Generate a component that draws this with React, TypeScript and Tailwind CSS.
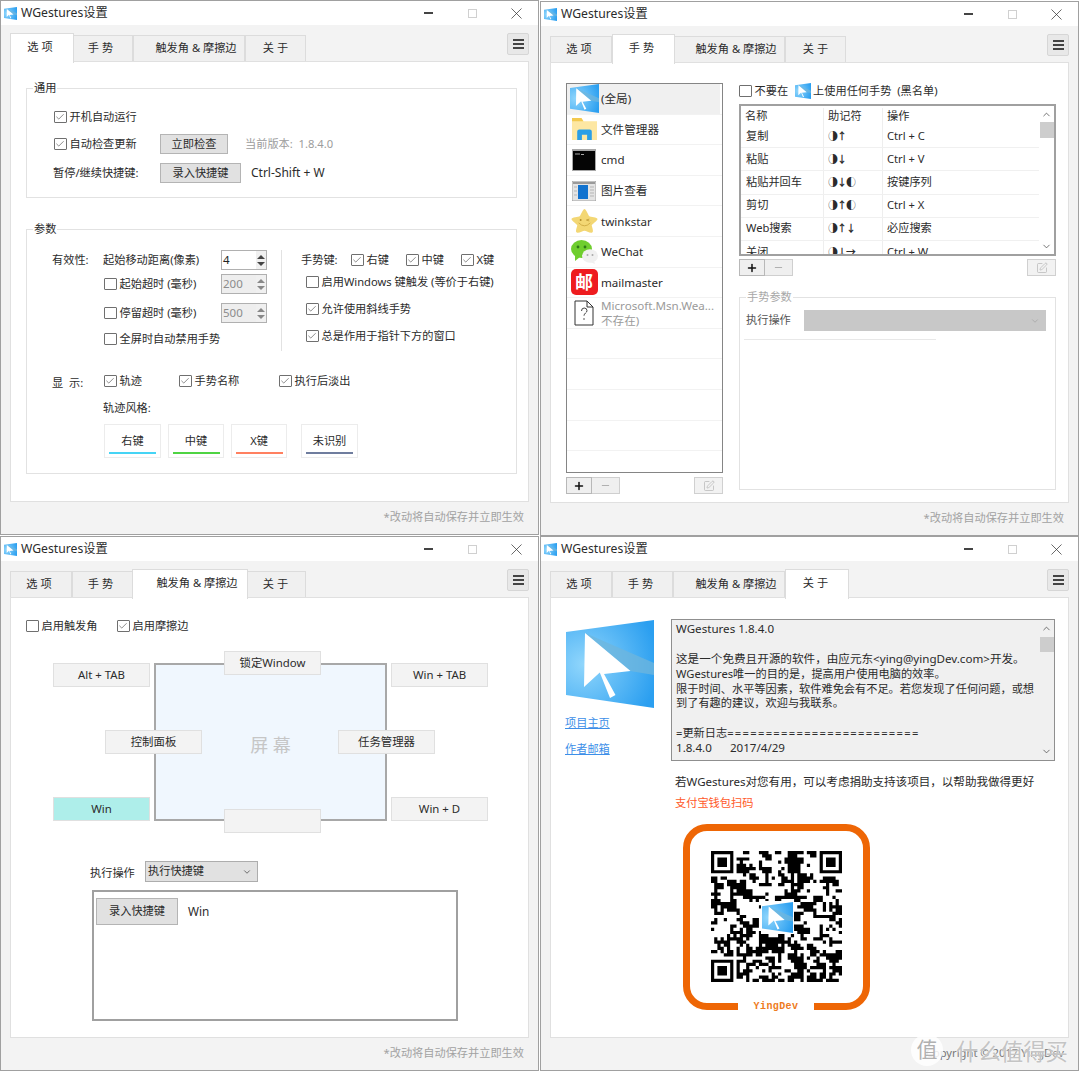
import { ReactNode } from "react";
import { Check, ChevronDown, ChevronUp, Minus, Plus, SquarePen, X } from "lucide-react";

const tabs = [
  { label: "选 项", size: "w-[62px] pr-[4px]", on: "w-[64px] -mr-[2px] pr-[4px]" },
  { label: "手 势", size: "w-[61px] pr-[4px]", on: "w-[63px] -mr-[2px] pr-[4px]" },
  { label: "触发角 & 摩擦边", size: "w-[112px] pl-[14px]", on: "w-[116px] -ml-[1px] -mr-[3px] pl-[14px]" },
  { label: "关 于", size: "w-[61px]", on: "w-[64px] -mr-[3px] pr-[3px]" },
];

function Logo({ className }: { className: string }) {
  return (
    <svg viewBox="0 0 88 88" className={className}>
      <defs>
        <radialGradient id="logoFill" cx="20%" cy="50%" r="85%">
          <stop offset="0%" stopColor="#90d6fc" />
          <stop offset="100%" stopColor="#2b9ff0" />
        </radialGradient>
      </defs>
      <polygon points="0,12 88,0 88,88 0,75" fill="url(#logoFill)" />
      <polygon points="19,13 88,43 88,55 64,51" fill="#6fb6dc" opacity="0.75" />
      <polygon points="19,13 64.5,51 38,54 49.5,75 44,78 33.8,52.5 18,67" fill="#ffffff" />
    </svg>
  );
}

function TitleBar() {
  return (
    <div className="flex h-[24px] items-center bg-white">
      <Logo className="ml-[3px] h-[13px] w-[13px]" />
      <span className="ml-[4px] text-[12.2px] text-[#2b2b2b]">WGestures设置</span>
      <div className="ml-auto flex items-center text-[#2b2b2b]">
        <div className="flex h-[18px] w-[44px] items-center justify-center">
          <div className="h-[1.5px] w-[9px] bg-[#444]" />
        </div>
        <div className="flex h-[18px] w-[44px] items-center justify-center">
          <div className="h-[9px] w-[9px] border border-[#d0d0d0]" />
        </div>
        <div className="flex h-[18px] w-[44px] items-center justify-center">
          <X size={19} strokeWidth={0.9} />
        </div>
      </div>
    </div>
  );
}

function Window({
  active,
  children,
  footer,
  className = "",
}: {
  active: number;
  children: ReactNode;
  footer?: ReactNode;
  className?: string;
}) {
  return (
    <div className={`flex h-[535px] w-[539px] flex-col border border-[#a0a0a0] bg-[#f3f3f3] ${className}`}>
      <TitleBar />
      <div className="flex-1 pl-[9px] pr-[9px] pt-[8px]">
        {/* Tabs */}
        <div className="flex h-[28px] items-start">
          {tabs.map((t, i) =>
            i === active ? (
              <div
                key={t.label}
                className={`relative z-10 flex h-[30px] items-center justify-center border border-b-0 border-[#dcdcdc] bg-white pb-[2px] text-[11.2px] text-[#2b2b2b] ${t.on}`}
              >
                {t.label}
              </div>
            ) : (
              <div
                key={t.label}
                className={`mt-[2px] flex h-[26px] items-center justify-center border border-b-0 border-[#dcdcdc] bg-[#f0f0f0] text-[11.2px] text-[#2b2b2b] ${t.size}`}
              >
                {t.label}
              </div>
            ),
          )}
          <div className="ml-auto flex h-[22px] w-[22px] flex-col items-center justify-center gap-[2px] rounded-[2px] border border-[#d6d6d6] bg-[#e8e8e8]">
            <div className="h-[2px] w-[11px] bg-[#444]" />
            <div className="h-[2px] w-[11px] bg-[#444]" />
            <div className="h-[2px] w-[11px] bg-[#444]" />
          </div>
        </div>
        <div className="h-[441px] border border-[#e0e0e0] bg-white pl-[15px]">{children}</div>
        <div className="relative flex h-[30px] items-center justify-end pr-[5px] text-[11.2px] text-[#a2a2a2]">
          {footer ?? "*改动将自动保存并立即生效"}
        </div>
      </div>
    </div>
  );
}

function CheckBox({ label, checked, className = "" }: { label: string; checked?: boolean; className?: string }) {
  return (
    <div className={`flex h-[20px] items-center ${className}`}>
      <div className="flex h-[12.5px] w-[12.5px] shrink-0 items-center justify-center rounded-[1px] border border-[#6f6f6f] bg-white">
        {checked && <Check size={10} strokeWidth={1.3} className="text-[#2b2b2b]" />}
      </div>
      <span className="ml-[3px] whitespace-nowrap text-[11.2px] text-[#2b2b2b]">{label}</span>
    </div>
  );
}

function Btn({ children, className }: { children: ReactNode; className: string }) {
  return (
    <div className={`flex items-center justify-center border border-[#b4b4b4] bg-[#e1e1e1] text-[11.2px] text-[#2b2b2b] ${className}`}>
      {children}
    </div>
  );
}

function Spinner({ value, disabled }: { value: string; disabled?: boolean }) {
  return (
    <div
      className={`flex h-[20px] w-[46px] items-center border border-[#b0b0b0] pl-[1px] text-[11.5px] ${
        disabled ? "bg-[#eeeeee] text-[#8c8c8c]" : "bg-white text-[#222]"
      }`}
    >
      <span className="flex-1">{value}</span>
      <div className="flex h-full w-[10px] flex-col justify-center gap-[3px] bg-[#f0f0f0]">
        <svg viewBox="0 0 8 4" className="h-[4px] w-[10px]">
          <polygon points="4,0 8,4 0,4" fill={disabled ? "#888" : "#444"} />
        </svg>
        <svg viewBox="0 0 8 4" className="h-[4px] w-[10px]">
          <polygon points="0,0 8,0 4,4" fill={disabled ? "#888" : "#444"} />
        </svg>
      </div>
    </div>
  );
}

function Group({
  label,
  muted,
  className,
  children,
}: {
  label: string;
  muted?: boolean;
  className: string;
  children: ReactNode;
}) {
  return (
    <div className={`relative border border-[#e2e2e2] ${className}`}>
      <span
        className={`absolute -top-[9px] left-[6px] bg-white px-[1px] text-[11.2px] leading-[16px] ${
          muted ? "text-[#a8a8a8]" : "text-[#2b2b2b]"
        }`}
      >
        {label}
      </span>
      {children}
    </div>
  );
}

function StyleButton({ label, bar, className }: { label: string; bar: string; className: string }) {
  return (
    <div className={`flex h-[34px] flex-col items-center border border-[#ececec] pt-[8px] text-[11.2px] text-[#2b2b2b] ${className}`}>
      <span className="leading-[16px]">{label}</span>
      <div className={`mt-[3px] h-[2px] w-[47px] ${bar}`} />
    </div>
  );
}

function OptionsPanel() {
  return (
    <div className="pt-[26px]">
      <Group label="通用" className="h-[110px] w-[491px] pl-[27px] pt-[18px]">
        <CheckBox checked label="开机自动运行" />
        <div className="mt-[7px] flex h-[20px] items-center">
          <CheckBox checked label="自动检查更新" className="w-[106px]" />
          <Btn className="h-[20px] w-[68px]">立即检查</Btn>
          <span className="ml-[17px] text-[11.2px] text-[#9c9c9c]">当前版本:&nbsp; 1.8.4.0</span>
        </div>
        <div className="mt-[9px] flex h-[20px] items-center text-[11.2px] text-[#2b2b2b]">
          <span className="-ml-[1px] w-[107px]">暂停/继续快捷键:</span>
          <Btn className="h-[20px] w-[81px]">录入快捷键</Btn>
          <span className="ml-[10px] text-[12px]">Ctrl-Shift + W</span>
        </div>
      </Group>
      <Group label="参数" className="mt-[31px] h-[245px] w-[491px] pl-[25px] pt-[20px]">
        <div className="flex h-[101px]">
          <div className="w-[229px] text-[11.2px] text-[#2b2b2b]">
            <div className="flex h-[20px] items-center">
              <span className="w-[51px]">有效性:</span>
              <span className="w-[118px]">起始移动距离(像素)</span>
              <Spinner value="4" />
            </div>
            <div className="mt-[4px] flex h-[20px] items-center pl-[52px]">
              <CheckBox label="起始超时 (毫秒)" className="w-[117px]" />
              <Spinner value="200" disabled />
            </div>
            <div className="mt-[9px] flex h-[20px] items-center pl-[52px]">
              <CheckBox label="停留超时 (毫秒)" className="w-[117px]" />
              <Spinner value="500" disabled />
            </div>
            <CheckBox label="全屏时自动禁用手势" className="mt-[6px] pl-[52px]" />
          </div>
          <div className="w-px bg-[#e2e2e2]" />
          <div className="pl-[19px]">
            <div className="flex h-[20px] items-center text-[11.2px] text-[#2b2b2b]">
              <span className="w-[50px]">手势键:</span>
              <CheckBox checked label="右键" className="w-[55px]" />
              <CheckBox checked label="中键" className="w-[55px]" />
              <CheckBox checked label="X键" />
            </div>
            <CheckBox label="启用Windows 键触发 (等价于右键)" className="mt-[2px] pl-[5px]" />
            <CheckBox checked label="允许使用斜线手势" className="mt-[7px] pl-[5px]" />
            <CheckBox checked label="总是作用于指针下方的窗口" className="mt-[7px] pl-[5px]" />
          </div>
        </div>
        <div className="mt-[20px] flex h-[20px] items-center text-[11.2px] text-[#2b2b2b]">
          <span className="w-[52px] whitespace-pre pt-[4px]">显  示:</span>
          <CheckBox checked label="轨迹" className="w-[75px]" />
          <CheckBox checked label="手势名称" className="w-[100px]" />
          <CheckBox checked label="执行后淡出" />
        </div>
        <div className="mt-[7px] pl-[51px] text-[11.2px] leading-[20px] text-[#2b2b2b]">轨迹风格:</div>
        <div className="ml-[52px] mt-[6px] flex">
          <StyleButton label="右键" bar="bg-[#45d4f5]" className="w-[57px]" />
          <StyleButton label="中键" bar="bg-[#4fd443]" className="ml-[7px] w-[56px]" />
          <StyleButton label="X键" bar="bg-[#ff8060]" className="ml-[7px] w-[56px]" />
          <StyleButton label="未识别" bar="bg-[#6f7d9e]" className="ml-[14px] w-[57px]" />
        </div>
      </Group>
    </div>
  );
}

function FolderIcon() {
  return (
    <svg viewBox="0 0 24 24" className="h-[25px] w-[25px]">
      <path d="M0 1 h9 l2 3 h13 v18 H0z" fill="#fde7a3" />
      <path d="M0 1 h9 l2 3 H0z" fill="#f3c94f" />
      <path d="M5 22 v-8 q0 -2 2 -2 h10 q2 0 2 2 v8 h-4.5 v-5 h-5 v5z" fill="#2b9fe6" />
    </svg>
  );
}

function CmdIcon() {
  return (
    <svg viewBox="0 0 24 22" className="h-[22px] w-[24px]">
      <rect width="24" height="22" fill="#a8a8a8" />
      <rect x="1" y="2" width="22" height="19" fill="#050505" />
      <path d="M3 5 h5 M9 5.5 h3" stroke="#bbbbbb" strokeWidth="0.9" />
    </svg>
  );
}

function ViewerIcon() {
  return (
    <svg viewBox="0 0 24 20" className="h-[20px] w-[24px]">
      <rect width="24" height="20" fill="#e4e4e4" stroke="#888" strokeWidth="0.7" />
      <rect x="1" y="1" width="22" height="2" fill="#9a9a9a" />
      <rect x="6" y="4" width="10" height="14" fill="#1273cf" />
      <path d="M18 6 h4 M18 9 h4 M18 12 h4 M18 15 h4 M2 6 h3 M2 10 h3 M2 14 h3" stroke="#b5b5b5" />
    </svg>
  );
}

function StarIcon() {
  return (
    <svg viewBox="0 0 28 26" className="h-[26px] w-[27px]">
      <path
        d="M14 0.5 C15.5 0.5 18 7 19 8 C20 8.6 27.5 9 27.5 11 C27.5 13 22 16 21.5 17.5 C21.5 19 24 24 22 25 C20 26 15.5 23 14 23 C12.5 23 8 26 6 25 C4 24 6.5 19 6.5 17.5 C6 16 0.5 13 0.5 11 C0.5 9 8 8.6 9 8 C10 7 12.5 0.5 14 0.5z"
        fill="#f3d774"
      />
      <circle cx="10" cy="12" r="1" fill="#b18a2a" />
      <path d="M16 12 l3 -1 M16 12 l3 1" stroke="#b18a2a" strokeWidth="0.7" />
      <path d="M8 15 q6 6 12 0" stroke="#c9a23a" strokeWidth="0.8" fill="none" />
    </svg>
  );
}

function WeChatIcon() {
  return (
    <svg viewBox="0 0 27 24" className="h-[24px] w-[27px]">
      <ellipse cx="10.5" cy="9" rx="10.5" ry="9" fill="#6fce2e" />
      <polygon points="4,15 4,21 9,17" fill="#6fce2e" />
      <circle cx="7" cy="7" r="1.4" fill="#2f7a16" />
      <circle cx="14" cy="7" r="1.4" fill="#2f7a16" />
      <ellipse cx="19" cy="16" rx="8" ry="6.8" fill="#f0f0f0" />
      <polygon points="23,21 24,24 19,22" fill="#f0f0f0" />
      <circle cx="16.5" cy="15" r="1" fill="#aaaaaa" />
      <circle cx="21.5" cy="15" r="1" fill="#aaaaaa" />
    </svg>
  );
}

function UnknownFileIcon() {
  return (
    <svg viewBox="0 0 20 26" className="h-[26px] w-[20px]">
      <path d="M1 1 h12 l6 6 v18 H1z M13 1 v6 h6" fill="#fff" stroke="#333" strokeWidth="1" />
      <path d="M7.5 11 q0 -3 2.7 -3 q2.8 0 2.8 2.7 c0 2.2 -3 2.4 -3 5" fill="none" stroke="#444" strokeWidth="1" />
      <circle cx="10" cy="19" r="0.8" fill="#444" />
    </svg>
  );
}

const apps: { icon: ReactNode; name: ReactNode; selected?: boolean }[] = [
  { icon: <Logo className="h-[29px] w-[29px]" />, name: "(全局)", selected: true },
  { icon: <FolderIcon />, name: "文件管理器" },
  { icon: <CmdIcon />, name: "cmd" },
  { icon: <ViewerIcon />, name: "图片查看" },
  { icon: <StarIcon />, name: "twinkstar" },
  { icon: <WeChatIcon />, name: "WeChat" },
  {
    icon: (
      <div className="flex h-[26px] w-[27px] items-center justify-center rounded-[5px] bg-[#ee1c1f] text-[18px] font-bold leading-none text-white">
        邮
      </div>
    ),
    name: "mailmaster",
  },
  {
    icon: <UnknownFileIcon />,
    name: (
      <span className="block text-[#9a9a9a]">
        Microsoft.Msn.Wea...
        <br />
        不存在)
      </span>
    ),
  },
];

const gestures = [
  ["复制", "◑↑", "Ctrl + C"],
  ["粘贴", "◑↓", "Ctrl + V"],
  ["粘贴并回车", "◑↓◐", "按键序列"],
  ["剪切", "◑↑◐", "Ctrl + X"],
  ["Web搜索", "◑↑↓", "必应搜索"],
  ["关闭", "◑↓→", "Ctrl + W"],
];

function Scrollbar() {
  return (
    <div className="flex w-[15px] shrink-0 flex-col items-center bg-white text-[#444]">
      <div className="flex h-[16px] items-center">
        <ChevronUp size={11} strokeWidth={1.6} />
      </div>
      <div className="h-[16px] w-[14px] bg-[#cdcdcd]" />
      <div className="flex-1" />
      <div className="flex h-[16px] items-center">
        <ChevronDown size={11} strokeWidth={1.6} />
      </div>
    </div>
  );
}

function AddRemove() {
  return (
    <div className="flex h-[17px]">
      <div className="flex w-[26px] items-center justify-center border border-[#b8b8b8] bg-[#efefef]">
        <Plus size={12} strokeWidth={3} className="text-[#111]" />
      </div>
      <div className="flex w-[28px] items-center justify-center border border-l-0 border-[#cfcfcf] bg-[#efefef]">
        <Minus size={11} strokeWidth={2} className="text-[#aaa]" />
      </div>
    </div>
  );
}

function EditBtn() {
  return (
    <div className="flex h-[17px] w-[29px] items-center justify-center border border-[#d0d0d0] bg-[#f2f2f2]">
      <SquarePen size={12} strokeWidth={1.4} className="text-[#b5b5b5]" />
    </div>
  );
}

function GesturesPanel() {
  return (
    <div className="flex pt-[20px]">
      <div className="w-[157px]">
        <div className="h-[390px] overflow-hidden border border-[#858585]">
          {apps.map((a, i) => (
            <div key={i} className="h-[30.6px] border-b border-[#f2f2f2] pr-[2px]">
              <div className={`flex h-full items-center text-[11.6px] leading-[15px] text-[#2b2b2b] ${a.selected ? "bg-[#f0f0f0]" : ""}`}>
                <div className="flex w-[34px] shrink-0 justify-center">{a.icon}</div>
                <div className="whitespace-nowrap">{a.name}</div>
              </div>
            </div>
          ))}
          {[0, 1, 2, 3, 4].map((i) => (
            <div key={i} className="h-[30.6px] border-b border-[#f2f2f2]" />
          ))}
        </div>
        <div className="mt-[4px] flex justify-between">
          <AddRemove />
          <EditBtn />
        </div>
      </div>
      <div className="ml-[16px] w-[317px]">
        <div className="flex h-[16px] items-center text-[11.2px] text-[#2b2b2b]">
          <CheckBox label="不要在" />
          <Logo className="ml-[7px] h-[16px] w-[16px]" />
          <span className="ml-[2px] whitespace-pre">上使用任何手势  (黑名单)</span>
        </div>
        <div className="mt-[5px] flex h-[152px] overflow-hidden border-2 border-[#a0a0a0]">
          <div className="flex-1 text-[11.2px] text-[#2b2b2b]">
            <div className="flex h-[19px] items-center pt-[2px]">
              <span className="w-[83px] border-r border-[#eeeeee] pl-[4px]">名称</span>
              <span className="w-[59px] border-r border-[#eeeeee] pl-[4px]">助记符</span>
              <span className="pl-[4px]">操作</span>
            </div>
            {gestures.map((g) => (
              <div key={g[0]} className="flex h-[23.2px] items-center border-b border-[#f0f0f0]">
                <span className="flex h-full w-[83px] items-center border-r border-[#eeeeee] pl-[5px]">{g[0]}</span>
                <span className="flex h-full w-[59px] items-center border-r border-[#eeeeee] pl-[4px] text-[10px] font-bold tracking-[-1px]">{g[1]}</span>
                <span className="pl-[4px]">{g[2]}</span>
              </div>
            ))}
          </div>
          <Scrollbar />
        </div>
        <div className="mt-[3px] flex justify-between">
          <AddRemove />
          <EditBtn />
        </div>
        <Group label="手势参数" muted className="mt-[21px] h-[193px] px-[6px] pt-[12px]">
          <div className="flex items-center text-[11.2px] text-[#555]">
            <span className="w-[58px]">执行操作</span>
            <div className="flex h-[21px] w-[242px] items-center justify-end bg-[#c8c8c8] pr-[6px]">
              <ChevronDown size={10} className="text-[#a8a8a8]" />
            </div>
          </div>
          <div className="-ml-[2px] mt-[8px] h-px w-[192px] bg-[#e8e8e8]" />
        </Group>
      </div>
    </div>
  );
}

function EdgeBtn({ label, className }: { label?: string; className: string }) {
  return (
    <div className={`absolute flex h-[24px] w-[97px] items-center justify-center border border-[#e0e0e0] text-[11.4px] text-[#2b2b2b] ${className}`}>
      {label}
    </div>
  );
}

function CornersPanel() {
  return (
    <div className="pt-[18px]">
      <div className="flex">
        <CheckBox label="启用触发角" className="w-[91px]" />
        <CheckBox checked label="启用摩擦边" />
      </div>
      {/* diagram: buttons sit over the screen edges */}
      <div className="relative ml-[27px] mt-[15px] h-[182px] w-[435px]">
        <div className="absolute left-[101px] top-[12px] flex h-[158px] w-[233px] items-center justify-center border-2 border-[#a8a8a8] bg-[#f0f7fe] pt-[6px] text-[18px] text-[#c6c6c6]">
          屏 幕
        </div>
        <EdgeBtn label="Alt + TAB" className="left-0 top-[12px] bg-[#f3f3f3]" />
        <EdgeBtn label="锁定Window" className="left-[171px] top-0 bg-[#f3f3f3]" />
        <EdgeBtn label="Win + TAB" className="left-[338px] top-[12px] bg-[#f3f3f3]" />
        <EdgeBtn label="控制面板" className="left-[52px] top-[79px] bg-[#f3f3f3]" />
        <EdgeBtn label="任务管理器" className="left-[285px] top-[79px] bg-[#f3f3f3]" />
        <EdgeBtn label="Win" className="left-0 top-[146px] border-[#aeeeea] bg-[#aeeeea]" />
        <EdgeBtn label="Win + D" className="left-[338px] top-[146px] bg-[#f3f3f3]" />
        <EdgeBtn className="left-[171px] top-[158px] bg-[#f3f3f3]" />
      </div>
      <div className="ml-[64px] mt-[28px] flex items-center text-[11.2px] text-[#2b2b2b]">
        <span className="w-[55px] pt-[3px]">执行操作</span>
        <div className="flex h-[21px] w-[113px] items-center justify-between border border-[#adadad] bg-[#e1e1e1] pl-[2px] pr-[5px]">
          <span>执行快捷键</span>
          <ChevronDown size={10} className="text-[#555]" />
        </div>
      </div>
      <div className="ml-[66px] mt-[8px] h-[131px] w-[366px] border-2 border-[#a0a0a0] pl-[2px] pt-[6px]">
        <div className="flex items-center">
          <Btn className="h-[27px] w-[82px]">录入快捷键</Btn>
          <span className="ml-[10px] text-[11.8px] text-[#2b2b2b]">Win</span>
        </div>
      </div>
    </div>
  );
}

// QR modules: finders are real, the data area is a fixed pseudo-random fill
function qrPath() {
  const n = 41;
  let seed = 20170429;
  const next = () => {
    seed = (seed * 1664525 + 1013904223) >>> 0;
    return seed / 4294967296;
  };
  let d = "";
  const finder = (r: number, c: number, ox: number, oy: number) => {
    const y = r - oy;
    const x = c - ox;
    return x === 0 || x === 6 || y === 0 || y === 6 || (x >= 2 && x <= 4 && y >= 2 && y <= 4);
  };
  const prev: boolean[] = [];
  for (let r = 0; r < n; r++) {
    let left = false;
    for (let c = 0; c < n; c++) {
      // lean towards the neighbours so the fill clumps like the picture
      const pick = next();
      let on = next() > 0.5;
      if (pick < 0.25) on = left;
      else if (pick < 0.5 && r > 0) on = prev[c];
      left = on;
      prev[c] = on;
      if (r < 8 && c < 8) on = r < 7 && c < 7 && finder(r, c, 0, 0);
      else if (r < 8 && c >= n - 8) on = r < 7 && c >= n - 7 && finder(r, c, n - 7, 0);
      else if (r >= n - 8 && c < 8) on = r >= n - 7 && c < 7 && finder(r, c, 0, n - 7);
      if (on) d += `M${c} ${r}h1v1h-1z`;
    }
  }
  return d;
}

function QrFrame() {
  return (
    <div className="relative ml-[12px] mt-[13px] flex h-[186px] w-[187px] items-center justify-center rounded-[24px] border-[7px] border-[#ee6605]">
      <div className="relative -mt-[2px] h-[131px] w-[131px]">
        <svg viewBox="0 0 41 41" className="h-full w-full">
          <path d={qrPath()} fill="#000" />
        </svg>
        <div className="absolute left-[50px] top-[50px] h-[33px] w-[33px] bg-white" />
        <Logo className="absolute left-[51px] top-[51px] h-[31px] w-[31px]" />
      </div>
      <div className="absolute -bottom-[7px] left-[48px] flex h-[14px] w-[76px] items-center justify-center bg-white pt-[6px] font-['Liberation_Mono',monospace] text-[10px] font-bold tracking-[0.4px] text-[#ee7a20]">
        YingDev
      </div>
    </div>
  );
}

function AboutPanel() {
  return (
    <div className="flex pt-[21px]">
      <div className="w-[105px]">
        <Logo className="mt-[1px] h-[88px] w-[88px]" />
        <div className="-ml-[1px] mt-[7px] text-[11.2px] leading-[16px] text-[#3d8fe8] underline">项目主页</div>
        <div className="-ml-[1px] mt-[10px] text-[11.2px] leading-[16px] text-[#3d8fe8] underline">作者邮箱</div>
      </div>
      <div className="w-[384px]">
        <div className="flex h-[142px] border border-[#8f8f8f] bg-[#f0f0f0]">
          <div className="flex-1 overflow-hidden pl-[4px] pt-[2px] text-[11.2px] leading-[14.9px] text-[#2b2b2b]">
            <div className="h-[14.9px] text-[11.6px]">WGestures 1.8.4.0</div>
            <div className="h-[14.9px]" />
            <div className="h-[14.9px] whitespace-pre text-[11.6px]">这是一个免费且开源的软件，由应元东&lt;ying@yingDev.com&gt;开发。</div>
            <div className="h-[14.9px] whitespace-pre">WGestures唯一的目的是，提高用户使用电脑的效率。</div>
            <div className="h-[14.9px] whitespace-pre">限于时间、水平等因素，软件难免会有不足。若您发现了任何问题，或想</div>
            <div className="h-[14.9px] whitespace-pre">到了有趣的建议，欢迎与我联系。</div>
            <div className="h-[14.9px]" />
            <div className="h-[14.9px] whitespace-pre">
              =更新日志<span className="tracking-[1.3px]">=========================</span>
            </div>
            <div className="h-[14.9px] whitespace-pre text-[11.6px]">1.8.4.0      2017/4/29</div>
          </div>
          <div className="flex w-[15px] shrink-0 flex-col items-center text-[#444]">
            <div className="flex h-[17px] items-center">
              <ChevronUp size={11} strokeWidth={1.6} />
            </div>
            <div className="h-[15px] w-[14px] bg-[#cdcdcd]" />
            <div className="flex-1" />
            <div className="flex h-[17px] items-center">
              <ChevronDown size={11} strokeWidth={1.6} />
            </div>
          </div>
        </div>
        <div className="ml-[4px] mt-[13px] whitespace-nowrap text-[11.55px] leading-[16px] text-[#2b2b2b]">
          若WGestures对您有用，可以考虑捐助支持该项目，以帮助我做得更好
        </div>
        <div className="ml-[4px] mt-[5px] text-[11.2px] leading-[16px] text-[#ff5a2a]">支付宝钱包扫码</div>
        <QrFrame />
      </div>
    </div>
  );
}

function Watermark() {
  return (
    <>
      <span className="text-[#777]">Copyright © 2017 YingDev</span>
      {/* site watermark lying over the footer */}
      <div className="absolute left-[361px] -top-[4px] flex h-[32px] w-[32px] items-center justify-center rounded-full bg-white/85 text-[21px] text-[#b0b0b0]">
        值
      </div>
      <div className="absolute left-[406px] -top-[1px] whitespace-nowrap text-[22.4px] leading-[30px] text-[#c4c4c4] [text-shadow:0_0_2px_#ffffff]">
        什么值得买
      </div>
    </>
  );
}

export default function App() {
  return (
    <div className="h-[1076px] w-[1080px] overflow-hidden bg-white font-['Noto_Sans','Noto_Sans_CJK_SC','DejaVu_Sans',sans-serif]">
      <div className="grid grid-cols-[540px_540px] grid-rows-[536px_536px]">
        <Window active={0}>
          <OptionsPanel />
        </Window>
        <Window active={1} className="mt-[1px]">
          <GesturesPanel />
        </Window>
        <Window active={2}>
          <CornersPanel />
        </Window>
        <Window active={3} footer={<Watermark />}>
          <AboutPanel />
        </Window>
      </div>
    </div>
  );
}
